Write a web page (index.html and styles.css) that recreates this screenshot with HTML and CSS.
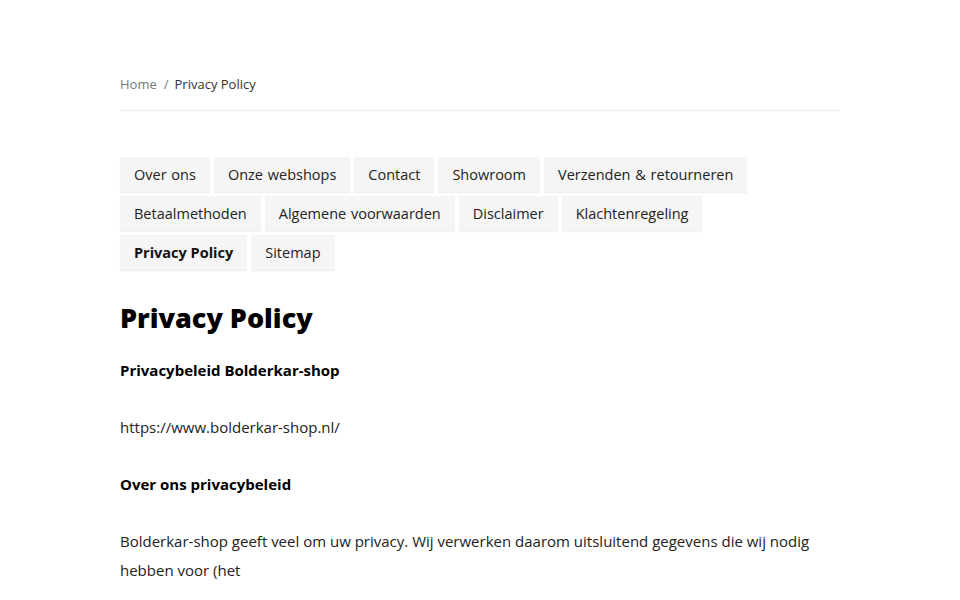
FILE: index.html
```html
<!DOCTYPE html>
<html lang="nl">
<head>
<meta charset="utf-8">
<link rel="stylesheet" href="styles.css">
</head>
<body>
<div class="page">
  <nav class="crumbs"><a class="crumb-link" href="#">Home</a><span class="sep">/</span><span class="crumb-current">Privacy Policy</span></nav>
  <ul class="tags">
    <li class="tag">Over ons</li>
    <li class="tag">Onze webshops</li>
    <li class="tag">Contact</li>
    <li class="tag">Showroom</li>
    <li class="tag">Verzenden &amp; retourneren</li>
    <li class="tag">Betaalmethoden</li>
    <li class="tag">Algemene voorwaarden</li>
    <li class="tag">Disclaimer</li>
    <li class="tag">Klachtenregeling</li>
    <li class="tag-break" aria-hidden="true"></li>
    <li class="tag tag-active">Privacy Policy</li>
    <li class="tag">Sitemap</li>
  </ul>
  <h1 class="title">Privacy Policy</h1>
  <div class="content">
    <p><strong>Privacybeleid Bolderkar-shop</strong></p>
    <p>https://www.bolderkar-shop.nl/</p>
    <p><strong>Over ons privacybeleid</strong></p>
    <p>Bolderkar-shop geeft veel om uw privacy. Wij verwerken daarom uitsluitend gegevens die wij nodig hebben voor (het</p>
  </div>
</div>
</body>
</html>
```
FILE: styles.css
```css
html, body { margin: 0; padding: 0; background: #fff; }
body { font-family: "Open Sans", "Noto Sans", sans-serif; color: #111; }
.page { width: 720px; margin: 0 auto; padding-top: 74px; }
.crumbs { font-size: 13px; line-height: 20px; padding-bottom: 16px; border-bottom: 1px solid #ececec; }
.crumb-link { color: #777; text-decoration: none; }
.sep { color: #777; margin: 0 6px 0 7px; }
.crumb-current { color: #333; }
.tags { list-style: none; margin: 46px 0 0; padding: 0; display: flex; flex-wrap: wrap; column-gap: 4px; row-gap: 0; }
.tag { background: #f5f5f5; box-shadow: 0 1px 1px rgba(0,0,0,0.06); font-size: 14.5px; line-height: 35px; height: 35px; margin-bottom: 4px; padding: 0 14px; color: #222; word-spacing: 1px; }
.tag-break { flex-basis: 100%; height: 0; }
.tag-active { font-weight: 700; color: #111; word-spacing: 0; }
.title { font-size: 27px; font-weight: 800; margin: 26px 0 0; line-height: 36px; color: #000; }
.content { margin-top: 20px; font-size: 15px; line-height: 28.5px; color: #222; }
.content p { margin: 0 0 28.5px; }
.content strong { color: #000; font-weight: 700; }
```
